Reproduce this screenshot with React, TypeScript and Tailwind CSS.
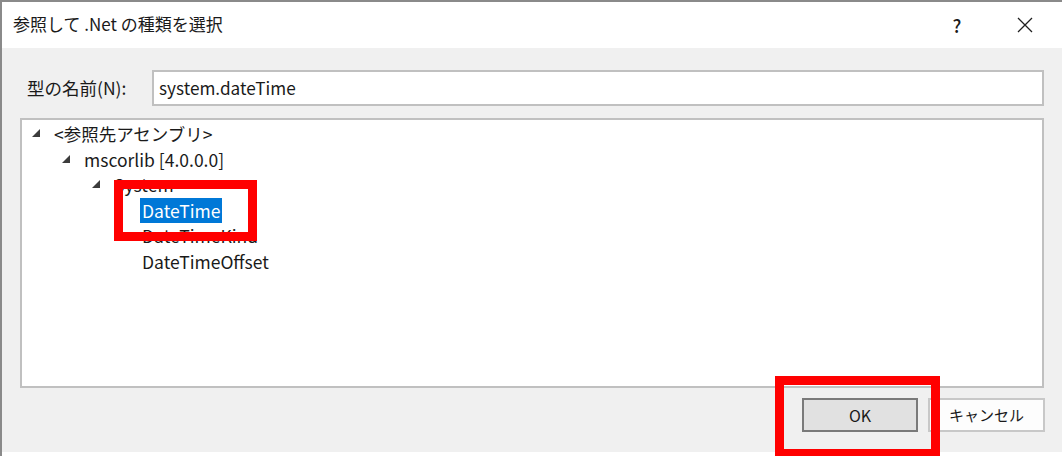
import React from "react";

const font = { fontFamily: '"Noto Sans CJK JP", "Noto Sans", sans-serif' };

function Tri() {
  return (
    <svg width="9" height="9" viewBox="0 0 9 9" className="shrink-0">
      <polygon points="8,0 8,8 0,8" fill="#3c3c3c" />
    </svg>
  );
}

function Row({ indent, expanded, children }: { indent: number; expanded?: boolean; children: React.ReactNode }) {
  return (
    <div className="flex items-center h-[25.5px]" style={{ paddingLeft: indent }}>
      <div className="w-[22px] flex items-center">{expanded ? <Tri /> : null}</div>
      {children}
    </div>
  );
}

export default function App() {
  return (
    <div
      className="relative w-[1062px] h-[456px] overflow-hidden bg-white border-l-2 border-t-2 border-l-[#8a8a8a] border-t-[#8a8a8a] text-[#1a1a1a]"
      style={font}
    >
      {/* title bar */}
      <div className="h-[46px] flex items-center pl-[11px] pr-[27px]">
        <div className="text-[17px] flex-1 pb-[2px]">参照して .Net の種類を選択</div>
        <div className="text-[18px] font-medium w-[20px] text-center mr-[50px]">?</div>
        <svg width="16" height="16" viewBox="0 0 16 16" className="mr-[2px]">
          <path d="M1 1 L15 15 M15 1 L1 15" stroke="#202020" strokeWidth="1.3" />
        </svg>
      </div>
      {/* body */}
      <div className="h-[404px] bg-[#f0f0f0] flex flex-col">
        <div className="flex items-center pt-[22px] pl-[25px]">
          <div className="w-[125px] text-[17.5px]">型の名前(N):</div>
          <div className="w-[892px] h-[36px] bg-white border-2 border-[#c0c0c0] flex items-center px-[5px] text-[17.2px]">
            system.dateTime
          </div>
        </div>
        <div className="ml-[18px] mt-[12px] w-[1024px] h-[270px] bg-white border-2 border-[#c0c0c0] pt-[1px] pl-[10px] text-[17.5px] leading-none">
          <Row indent={0} expanded>
            <span>&lt;参照先アセンブリ&gt;</span>
          </Row>
          <Row indent={30} expanded>
            <span>mscorlib [4.0.0.0]</span>
          </Row>
          <Row indent={60} expanded>
            <span>System</span>
          </Row>
          <Row indent={86}>
            <span className="bg-[#0078d7] text-white px-[2px] py-[4px]">DateTime</span>
          </Row>
          <Row indent={88}>
            <span>DateTimeKind</span>
          </Row>
          <Row indent={88}>
            <span>DateTimeOffset</span>
          </Row>
        </div>
        <div className="flex justify-end gap-[10px] pr-[17px] mt-[10px]">
          <div className="w-[116px] h-[34px] bg-[#e1e1e1] border-2 border-[#7a7a7a] flex items-center justify-center text-[16px]">
            OK
          </div>
          <div className="w-[117px] h-[34px] bg-[#fdfdfd] border-2 border-[#c8c8c8] flex items-center justify-center text-[15px]">
            キャンセル
          </div>
        </div>
      </div>
      {/* red highlight overlays */}
      <div className="absolute left-[112px] top-[178px] w-[143px] h-[61px] border-[9px] border-[#ff0000]" />
      <div className="absolute left-[773px] top-[374px] w-[165px] h-[82px] border-[9px] border-[#ff0000]" />
    </div>
  );
}
